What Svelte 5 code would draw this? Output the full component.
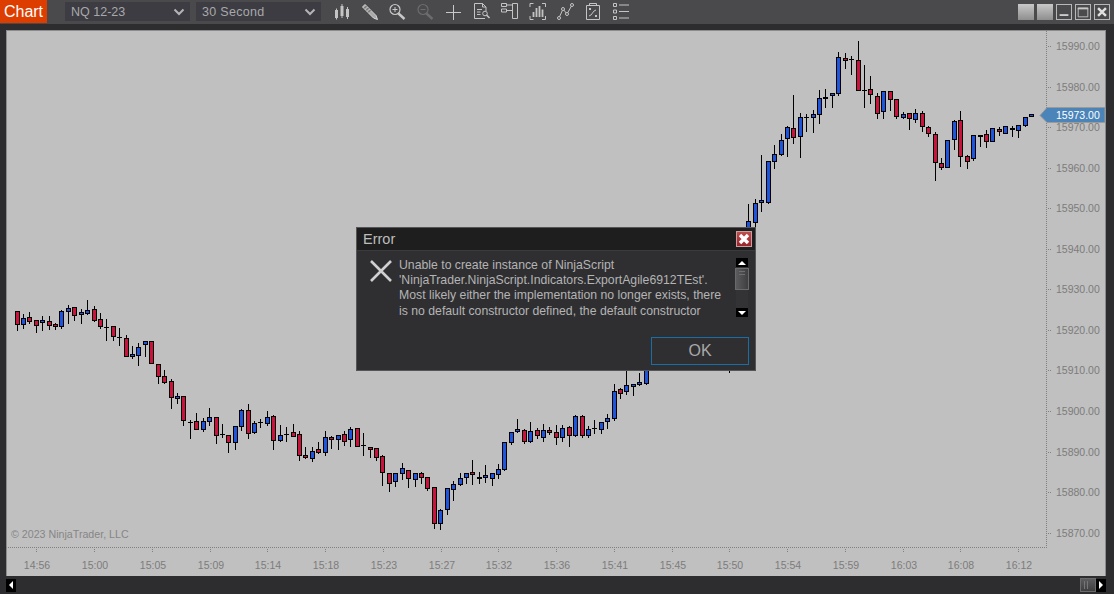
<script>
  // [xz, wickTop, bodyTop, bodyBottom, wickBottom, colour] in segment-local coordinates at 3x
  const segs = [
    { ox: 0, oy: 290, c: [
      [52,64,64,104,122,'r'],[70,72,85,104,116,'b'],[88,67,82,95,101,'r'],[109,91,91,107,128,'r'],[127,79,91,98,122,'b'],
      [148,79,94,107,120,'r'],[166,99,103,110,120,'r'],[184,60,64,110,116,'b'],[205,45,55,65,101,'b'],[223,52,52,77,92,'r'],
      [244,57,67,74,101,'b'],[262,30,61,71,74,'b'],[283,49,58,92,95,'r'],[301,69,88,110,116,'r'],[319,87,110,112,152,'k'],
      [340,109,109,140,152,'r'],[358,114,142,145,167,'k'],[379,136,145,200,200,'r'],[397,168,193,200,206,'b'],[415,160,172,197,227,'b'],
      [436,152,154,164,200,'b'],[454,154,154,221,221,'r'],[475,223,223,260,281,'r'],[493,240,259,278,281,'r'],[514,268,274,325,356,'r'],
      [532,310,319,326,341,'b'],[550,319,319,392,407,'r'],[571,391,397,398,446,'k'],[589,370,394,419,419,'r']
    ]},
    { ox: 200, oy: 390, c: [
      [10,85,94,119,125,'b'],[28,55,82,95,107,'b'],[49,82,82,137,161,'r'],[67,102,133,134,143,'k'],[85,134,134,158,188,'r'],
      [106,109,109,158,179,'b'],[124,57,61,110,122,'b'],[145,43,61,131,146,'r'],[163,94,100,128,131,'b'],[181,88,95,97,113,'k'],
      [202,64,82,101,107,'b'],[220,76,79,152,179,'r'],[241,106,136,152,155,'b'],[259,112,133,135,155,'k'],[280,103,127,140,140,'r'],
      [298,124,133,197,212,'r'],[316,171,196,203,206,'r'],[337,172,184,206,215,'b'],[355,156,178,188,193,'r'],[376,124,142,188,197,'b'],
      [394,139,142,149,176,'r'],[415,136,136,149,179,'b'],[433,124,133,155,167,'r'],[451,112,118,149,170,'b'],[472,115,115,170,170,'r'],
      [490,130,166,167,197,'k'],[511,172,172,179,203,'r'],[529,175,175,203,212,'r'],[547,196,199,248,287,'r'],[568,250,250,281,305,'r'],
      [586,250,250,277,290,'b']
    ]},
    { ox: 400, oy: 370, c: [
      [7,280,295,313,329,'b'],[25,301,301,328,353,'r'],[46,310,310,331,350,'b'],[64,307,310,325,341,'r'],[82,322,322,356,362,'r'],
      [103,352,352,461,478,'r'],[121,418,421,461,480,'b'],[142,355,355,419,434,'b'],[160,334,343,361,392,'b'],[181,310,325,344,347,'b'],
      [199,310,310,323,341,'b'],[217,270,307,314,344,'r'],[238,307,322,326,341,'k'],[256,286,316,323,338,'b'],[277,310,310,326,347,'b'],
      [295,283,298,314,326,'b'],[313,217,217,299,302,'b'],[334,187,187,218,224,'b'],[352,148,178,187,190,'b'],[373,178,181,215,221,'r'],
      [391,157,184,215,218,'b'],[412,175,181,199,208,'r'],[430,163,181,203,215,'b'],[448,172,181,188,196,'r'],[469,166,187,203,224,'r'],
      [487,166,175,203,215,'b'],[508,169,172,197,230,'r'],[526,136,139,197,200,'b'],[547,136,139,197,203,'r'],[565,169,178,197,203,'b'],
      [583,151,175,177,191,'k'],[604,157,157,179,191,'b'],[622,133,145,157,176,'b'],[643,42,64,146,152,'b'],[661,55,58,71,86,'r'],
      [679,-20,46,65,74,'b'],[700,41,42,50,77,'b'],[718,10,37,44,47,'b'],[739,-20,-10,41,44,'b'],[988,-20,-20,-10,10,'k']
    ]},
    { ox: 720, oy: 35, c: [
      [85,507,559,620,640,'b'],[106,492,505,563,578,'b'],[124,361,496,503,530,'b'],[145,379,379,503,506,'b'],[163,331,358,380,401,'b'],
      [184,298,316,359,362,'b'],[202,274,277,313,365,'b'],[220,181,280,310,326,'r'],[241,235,247,305,368,'b'],[259,238,247,248,291,'k'],
      [280,226,238,248,293,'b'],[298,166,190,239,266,'b'],[316,163,187,193,218,'b'],[337,175,175,184,218,'b'],[355,52,67,178,182,'b'],
      [376,55,70,79,101,'r'],[394,64,73,76,119,'k'],[415,18,76,169,169,'r'],[433,91,166,169,218,'k'],[451,124,163,179,208,'r']
    ]},
    { ox: 860, oy: 80, c: [
      [52,40,49,103,116,'r'],[70,34,34,97,116,'b'],[91,34,34,61,92,'r'],[109,58,58,112,116,'r'],[130,97,103,113,116,'b'],
      [148,100,100,118,149,'r'],[166,88,100,119,128,'b'],[187,94,100,142,155,'r'],[205,139,142,163,170,'r'],[226,157,163,250,302,'r'],
      [244,235,250,263,269,'r'],[262,181,181,263,263,'b'],[283,121,124,181,209,'b'],[301,94,121,232,260,'r'],[322,226,229,245,266,'r'],
      [340,166,166,238,242,'b'],[361,166,166,170,200,'k'],[379,151,163,185,203,'r'],[397,145,145,187,187,'b'],[418,142,148,157,167,'r'],
      [436,139,139,163,163,'b'],[457,139,145,151,170,'r'],[475,136,136,154,173,'b'],[496,112,112,139,142,'b'],[514,103,103,112,112,'b']
    ]}
  ];
  const fills = { r: '#c8143c', b: '#1f55dc', k: '#000' };
  const candles = segs.flatMap((s) =>
    s.c.map(([x, wt, bt, bb, wb, col]) => {
      const cx = Math.floor(s.ox + x / 3);
      const top = Math.round(s.oy + bt / 3);
      const bot = Math.round(s.oy + bb / 3);
      return {
        cx,
        wt: Math.round(s.oy + wt / 3),
        wb: Math.round(s.oy + wb / 3),
        top,
        h: Math.max(bot - top, 1),
        fill: fills[col]
      };
    })
  );

  const prices = [15990, 15980, 15970, 15960, 15950, 15940, 15930, 15920, 15910, 15900, 15890, 15880, 15870].map((p, i) => ({
    label: p.toFixed(2),
    y: Math.round(46 + i * 40.56)
  }));
  const times = ['14:56','15:00','15:05','15:09','15:14','15:18','15:23','15:27','15:32','15:36','15:41','15:45','15:50','15:54','15:59','16:03','16:08','16:12'].map((t, i) => ({
    label: t,
    x: Math.round(36.3 + i * 57.75)
  }));
</script>

<div class="app">
  <header class="toolbar">
    <div class="tab">Chart</div>
    <div class="select first"><span>NQ 12-23</span>
      <svg width="12" height="8" viewBox="0 0 12 8"><path d="M1.5 1.5 6 6l4.5-4.5" fill="none" stroke="#b4b4b8" stroke-width="2"/></svg>
    </div>
    <div class="select"><span class="spaced">30 Second</span>
      <svg width="12" height="8" viewBox="0 0 12 8"><path d="M1.5 1.5 6 6l4.5-4.5" fill="none" stroke="#b4b4b8" stroke-width="2"/></svg>
    </div>
    <div class="tools">
      <svg class="tool" viewBox="0 0 18 18"><path d="M3.500 5.500v11M9 1v14M14.500 4v12" stroke="#c4c4c4" fill="none"/><rect x="2" y="7" width="3" height="8" fill="#c4c4c4"/><rect x="7.500" y="3" width="3" height="10" fill="#c4c4c4"/><rect x="13" y="6" width="3" height="8" fill="#c4c4c4"/></svg>
      <svg class="tool" viewBox="0 0 18 18"><path d="M1.500 4 4 1.500l11 11 1.500 4-4-1.500z" fill="#a8a8a8" stroke="#d8d8d8"/><path d="M3 5.500 5.500 3M5 7.500 7.500 5M7 9.500 9.500 7" stroke="#555"/></svg>
      <svg class="tool" viewBox="0 0 18 18"><circle cx="6" cy="6.500" r="5" fill="none" stroke="#c8c8c8" stroke-width="1.200"/><path d="M3.500 6.500h5M6 4v5" stroke="#c8c8c8"/><path d="m9.500 10.500 6 5.500" stroke="#c8c8c8" stroke-width="2.400"/></svg>
      <svg class="tool" viewBox="0 0 18 18"><circle cx="6" cy="6.500" r="5" fill="none" stroke="#6c6c6c" stroke-width="1.200"/><path d="M3.500 6.500h5" stroke="#6c6c6c"/><path d="m9.500 10.500 6 5.500" stroke="#6c6c6c" stroke-width="2.400"/></svg>
      <svg class="tool" viewBox="0 0 18 18"><path d="M1 9.500h15M8.500 2v15" stroke="#c8c8c8" fill="none"/></svg>
      <svg class="tool" viewBox="0 0 18 18"><path d="M12 15.500H1.500v-15h8l3.500 3.500v4M9.500.5V4H13M4 6.500h5M4 9h3.500M4 11.500h3.500" fill="none" stroke="#c4c4c4"/><circle cx="12" cy="10.500" r="2.300" fill="none" stroke="#c4c4c4"/><path d="m13.500 12 3 3" stroke="#c4c4c4" stroke-width="1.600"/></svg>
      <svg class="tool" viewBox="0 0 18 18"><path d="M.5.500h5v3h-5zM.5 6h5v3h-5zM5.500 2h6M5.500 7.500h6M11.500.500h5v15h-5z" fill="none" stroke="#c4c4c4"/></svg>
      <svg class="tool" viewBox="0 0 18 18"><path d="M1 4V.5h3.500M13 .5h3.500V4M1 13v3.500h3.500M13 16.500h3.500V13" fill="none" stroke="#c4c4c4"/><path d="M4.500 9v5M7.500 5v9M10.500 3v11M13.500 6.500V14" stroke="#c4c4c4" stroke-width="1.800"/></svg>
      <svg class="tool" viewBox="0 0 18 18"><path d="M2 15 6 6l4 5 5-9" fill="none" stroke="#c4c4c4"/><circle cx="2" cy="15" r="1.500" fill="#4a4a4c" stroke="#c4c4c4"/><circle cx="6" cy="6" r="1.500" fill="#4a4a4c" stroke="#c4c4c4"/><circle cx="10" cy="11" r="1.500" fill="#4a4a4c" stroke="#c4c4c4"/><circle cx="15" cy="2" r="1.500" fill="#4a4a4c" stroke="#c4c4c4"/></svg>
      <svg class="tool" viewBox="0 0 18 18"><path d="M1.500 2.500h13v14h-13zM4.500 2.500V.5h7v2" fill="none" stroke="#c4c4c4"/><path d="m4 5 2 2M6 5 4 7M10 12l2 2M12 12l-2 2M4 13l2-1 3-4 2-1" fill="none" stroke="#c4c4c4"/></svg>
      <svg class="tool" viewBox="0 0 18 18"><path d="M.5.500h3v3h-3zM.5 7h3v3h-3zM.5 13.500h3v3h-3zM6 2h10M6 8.500h10M6 15h10" fill="none" stroke="#c4c4c4"/></svg>
    </div>
    <div class="win">
      <span class="tile"></span>
      <span class="tile"></span>
      <span class="wbtn"><svg viewBox="0 0 16 16"><rect x="3" y="10.500" width="10" height="2" fill="#d4d4d4"/></svg></span>
      <span class="wbtn"><svg viewBox="0 0 16 16"><path d="M2.500 3.500h11v10h-11z" fill="none" stroke="#c8c8c8"/><rect x="2" y="3" width="12" height="2" fill="#c8c8c8"/></svg></span>
      <span class="wbtn"><svg viewBox="0 0 16 16"><path d="m3.500 3.500 9 9M12.500 3.500l-9 9" stroke="#e0e0e0" stroke-width="2.800"/></svg></span>
    </div>
  </header>

  <main class="stage">
    <svg class="chart" width="1114" height="546" viewBox="0 30 1114 546">
      <g shape-rendering="crispEdges">
        <path d="M6 547.500H1046.500V31" fill="none" stroke="#808080" stroke-dasharray="1 1"/>
        {#each prices as p}
          <path d={`M1048 ${p.y + 0.5}h3`} stroke="#808080" stroke-dasharray="1 1"/>
        {/each}
        {#each times as t}
          <path d={`M${t.x + 0.5} 549v3`} stroke="#808080" stroke-dasharray="1 1"/>
        {/each}
        {#each candles as k}
          <rect x={k.cx} y={k.wt} width="1" height={k.wb - k.wt} fill="#000"/>
          <rect x={k.cx - 2} y={k.top} width="5" height={k.h} fill="#000"/>
          {#if k.h > 2}
            <rect x={k.cx - 1} y={k.top + 1} width="3" height={k.h - 2} fill={k.fill}/>
          {/if}
        {/each}
      </g>
      {#each prices as p}
        <text class="axis" x="1056" y={p.y + 4}>{p.label}</text>
      {/each}
      {#each times as t}
        <text class="axis" x={t.x + 1} y="569" text-anchor="middle">{t.label}</text>
      {/each}
      <text class="copy" x="11" y="538">© 2023 NinjaTrader, LLC</text>
      <path d="M1040 115.500l7-8H1105v15H1047z" fill="#4a84b8" stroke="#9a9a9a"/>
      <text class="last" x="1056" y="119">15973.00</text>
    </svg>

    <section class="dialog">
      <div class="dtitle">
        <span>Error</span>
        <span class="dclose"><svg viewBox="0 0 16 16" width="16" height="16"><path d="m4 4 8 8M12 4l-8 8" stroke="#fff" stroke-width="3.400"/></svg></span>
      </div>
      <div class="dbody">
        <svg class="xicon" width="24" height="24" viewBox="0 0 24 24"><path d="m2 2 20 20M22 2 2 22" stroke="#d0d0d0" stroke-width="2.600"/></svg>
        <p class="msg">Unable to create instance of NinjaScript<br/>'NinjaTrader.NinjaScript.Indicators.ExportAgile6912TEst'.<br/>Most likely either the implementation no longer exists, there<br/>is no default constructor defined, the default constructor</p>
        <div class="vscroll">
          <span class="sbtn"><svg width="8" height="4" viewBox="0 0 8 4"><path d="M0 4 4 0l4 4z" fill="#fff"/></svg></span>
          <span class="thumb"><i></i><i></i></span>
          <span class="spacer"></span>
          <span class="sbtn"><svg width="8" height="4" viewBox="0 0 8 4"><path d="M0 0l4 4 4-4z" fill="#fff"/></svg></span>
        </div>
      </div>
      <div class="dfoot"><button class="ok">OK</button></div>
    </section>
  </main>

  <footer class="hscroll">
    <span class="hbtn"><svg width="4" height="8" viewBox="0 0 4 8"><path d="M4 0 0 4l4 4z" fill="#fff"/></svg></span>
    <span class="hspacer"></span>
    <span class="hthumb"><i></i><i></i></span>
    <span class="hbtn"><svg width="4" height="8" viewBox="0 0 4 8"><path d="M0 0l4 4-4 4z" fill="#fff"/></svg></span>
  </footer>
</div>

<style>
  :global(body) { margin: 0; background: #2d2d30; overflow: hidden; }
  .app {
    width: 1114px; height: 594px; display: flex; flex-direction: column; overflow: hidden;
    background: #2d2d30; font-family: "Liberation Sans", Arial, sans-serif;
  }
  .toolbar {
    height: 24px; flex: none; display: flex; align-items: center; background: #4a4a4c;
  }
  .tab {
    width: 47px; height: 23px; align-self: flex-start; background: #dd3e00; color: #fff; font-size: 16px;
    line-height: 23px; text-align: center;
  }
  .select {
    width: 125px; height: 19px; margin-left: 6px; margin-bottom: 1px; box-sizing: border-box; padding: 0 5px 0 6px;
    display: flex; align-items: center; justify-content: space-between; background: #3c3c42;
    color: #a8a8ac; font-size: 12.500px;
  }
  .select.first { margin-left: 18px; }
  .spaced { letter-spacing: .3px; }
  .tools { display: flex; margin-left: 12px; gap: 10px; }
  .tool { width: 18px; height: 18px; display: block; }
  .win { margin-left: auto; margin-right: 4px; display: flex; gap: 3px; }
  .tile {
    width: 16px; height: 16px; background: linear-gradient(#c8c8c8, #8e8e8e);
  }
  .wbtn { width: 14px; height: 14px; border: 1px solid #b8b8b8; display: block; }
  .wbtn svg { width: 14px; height: 14px; display: block; }
  .stage { position: relative; height: 552px; flex: none; background: #2d2d30; }
  .stage::before {
    content: ""; position: absolute; left: 6px; top: 6px; width: 1100px; height: 546px; background: #c0c0c0;
    box-shadow: inset 1px 1px 0 #8c8c8c, inset -1px 0 0 #8c8c8c;
  }
  .chart {
    position: absolute; left: 0; top: 6px; display: block; background: transparent;
    clip-path: inset(0 8px 0 6px);
  }
  .axis { font: 10.500px "Liberation Sans", Arial, sans-serif; fill: #7c7c7c; }
  .copy { font: 10.670px "Liberation Sans", Arial, sans-serif; fill: #868686; }
  .last { font: 10.500px "Liberation Sans", Arial, sans-serif; fill: #fff; }
  .dialog {
    position: absolute; left: 356px; top: 203px; width: 400px; height: 144px; box-sizing: border-box;
    border: 1px solid #555558; background: #2f2f32; display: flex; flex-direction: column;
  }
  .dtitle {
    height: 22px; flex: none; background: #1e1e1f; display: flex; align-items: center; justify-content: space-between;
    padding: 0 3px 0 6px; color: #bcbcbc; font-size: 14.500px; border-bottom: 1px solid #3a3a3c;
  }
  .dclose {
    width: 16px; height: 16px; background: linear-gradient(#c05050, #98202a); box-shadow: inset 0 0 0 1px #c8a0a0; display: block;
  }
  .dclose svg { display: block; }
  .dbody { display: flex; height: 65px; flex: none; padding: 7px 7px 0 12px; box-sizing: content-box; }
  .xicon { flex: none; margin-top: 1px; display: block; }
  .msg {
    margin: 0 0 0 6px; width: 337px; height: 60px; overflow: hidden; color: #b4b4b4; font-size: 12.250px; line-height: 15.200px;
    white-space: nowrap;
  }
  .vscroll { width: 12px; height: 59px; display: flex; flex-direction: column; flex: none; background: #333336; }
  .sbtn { height: 9px; background: #000; display: flex; align-items: center; justify-content: center; flex: none; }
  .sbtn svg { display: block; }
  .thumb {
    height: 22px; flex: none; margin: 1px -1px 0; box-sizing: border-box; border: 1px solid #6a6a6a; padding: 2px 3px;
    background: linear-gradient(90deg, #5c5c5e, #3e3e40); display: flex; flex-direction: column; gap: 2px;
  }
  .thumb i { height: 1px; background: #6e6e70; display: block; }
  .spacer { flex: 1; }
  .dfoot { flex: 1; display: flex; justify-content: flex-end; padding: 0 6px; align-items: flex-start; }
  .ok {
    width: 98px; height: 28px; margin-top: 14px; background: #2f2f32; border: 1px solid #1a6ea6; color: #a8a8a8;
    font: 16px "Liberation Sans", Arial, sans-serif; padding: 0;
  }
  .hscroll { height: 14px; flex: none; margin: 2px 8px 0 6px; display: flex; align-items: center; }
  .hbtn { width: 10px; height: 13px; background: #000; display: flex; align-items: center; justify-content: center; flex: none; }
  .hspacer { flex: 1; }
  .hthumb {
    width: 16px; height: 14px; box-sizing: border-box; border: 1px solid #6a6a6a; padding: 2px 3px; display: flex; gap: 2px;
    background: linear-gradient(#5c5c5e, #3e3e40);
  }
  .hthumb i { width: 1px; background: #767678; display: block; }
</style>
